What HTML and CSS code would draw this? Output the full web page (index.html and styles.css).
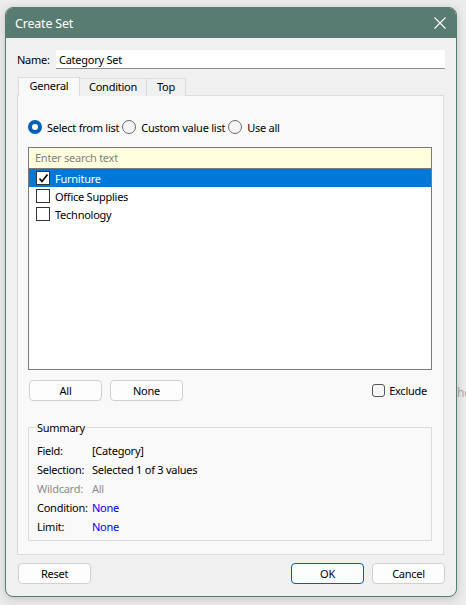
FILE: index.html
```html
<!DOCTYPE html>
<html>
<head>
<meta charset="utf-8">
<link rel="stylesheet" href="styles.css">
</head>
<body>
<div class="bg-text">he</div>
<div class="dialog">
  <div class="titlebar">
    <span class="title">Create Set</span>
    <svg class="close" width="12" height="12" viewBox="0 0 12 12"><path d="M0.5 0.5 L11.5 11.5 M11.5 0.5 L0.5 11.5" stroke="#fff" stroke-width="1.1" fill="none"/></svg>
  </div>
  <div class="content">
    <div class="name-row">
      <label class="name-label">Name:</label>
      <div class="name-input">Category Set</div>
    </div>
    <div class="tabs">
      <div class="tab active">General</div>
      <div class="tab">Condition</div>
      <div class="tab">Top</div>
    </div>
    <div class="panel">
      <div class="radios">
        <span class="radio checked"></span><span class="rlabel">Select from list</span>
        <span class="radio"></span><span class="rlabel">Custom value list</span>
        <span class="radio"></span><span class="rlabel">Use all</span>
      </div>
      <div class="listbox">
        <div class="search">Enter search text</div>
        <div class="item selected"><span class="cb checked"><svg width="11" height="11" viewBox="0 0 11 11"><path d="M1.5 5.5 L4 8.5 L9.5 1.5" stroke="#000" stroke-width="1.6" fill="none"/></svg></span>Furniture</div>
        <div class="item"><span class="cb"></span>Office Supplies</div>
        <div class="item"><span class="cb"></span>Technology</div>
      </div>
      <div class="btn-row">
        <button class="btn">All</button>
        <button class="btn">None</button>
        <span class="spacer"></span>
        <span class="cb small"></span><span class="exclude">Exclude</span>
      </div>
      <fieldset class="summary">
        <legend>Summary</legend>
        <div class="srow"><span class="sk">Field:</span><span class="sv">[Category]</span></div>
        <div class="srow"><span class="sk">Selection:</span><span class="sv">Selected 1 of 3 values</span></div>
        <div class="srow dim"><span class="sk">Wildcard:</span><span class="sv">All</span></div>
        <div class="srow"><span class="sk">Condition:</span><span class="sv link">None</span></div>
        <div class="srow"><span class="sk">Limit:</span><span class="sv link">None</span></div>
      </fieldset>
    </div>
    <div class="footer">
      <button class="btn">Reset</button>
      <span class="spacer"></span>
      <button class="btn primary">OK</button>
      <button class="btn">Cancel</button>
    </div>
  </div>
</div>
</body>
</html>
```
FILE: styles.css
```css
* { box-sizing: border-box; }
html, body { margin: 0; padding: 0; }
body {
  width: 466px;
  height: 605px;
  background: #ececec;
  font-family: "Noto Sans", "Open Sans", sans-serif;
  font-size: 11px;
  letter-spacing: -0.25px;
  color: #000;
  overflow: hidden;
  position: relative;
}
.bg-text {
  position: absolute;
  left: 457px;
  top: 384px;
  font-size: 12px;
  color: #a8a8a8;
}
.dialog {
  position: relative;
  margin: 7px 0 0 5px;
  width: 452px;
  height: 590px;
  background: #f0f0f0;
  border: 1px solid #587c72;
  border-radius: 8px;
  overflow: hidden;
  box-shadow: 0 2px 10px rgba(0,0,0,0.18);
  display: flex;
  flex-direction: column;
}
.titlebar {
  height: 30px;
  background: #587c72;
  display: flex;
  align-items: center;
  padding: 0 9px 0 9px;
  flex: none;
}
.title {
  color: #fff;
  font-size: 12.5px;
  letter-spacing: -0.2px;
  flex: 1;
}
.close { margin-right: 1px; }
.content {
  flex: 1;
  display: flex;
  flex-direction: column;
  padding: 12px 11px 0 11px;
}
.name-row {
  display: flex;
  align-items: center;
  height: 19px;
}
.name-label { width: 39px; }
.name-input {
  flex: 1;
  height: 19px;
  background: #fff;
  border-bottom: 1px solid #8a8a8a;
  padding: 1px 3px;
  line-height: 17px;
}
.tabs {
  display: flex;
  margin-top: 8px;
  margin-left: 1px;
  height: 19px;
  align-items: flex-end;
  position: relative;
  z-index: 1;
}
.tab {
  height: 18px;
  line-height: 16px;
  border: 1px solid #dcdcdc;
  border-bottom: none;
  background: #f0f0f0;
  margin-left: -1px;
  text-align: center;
  padding: 0;
}
.tab:nth-child(2) { width: 68px; }
.tab:nth-child(3) { width: 40px; }
.tab.active {
  height: 19px;
  background: #f9f9f9;
  width: 62px;
  margin-left: 0;
}
.panel {
  background: #f9f9f9;
  border: 1px solid #dcdcdc;
  margin-top: -1px;
  width: 427px;
  height: 460px;
  padding: 0 11px 0 10px;
  display: flex;
  flex-direction: column;
}
.radios {
  display: flex;
  align-items: center;
  margin-top: 23px;
  height: 16px;
}
.radio {
  width: 14px;
  height: 14px;
  border-radius: 50%;
  border: 1px solid #6b6b6b;
  background: #f4f4f4;
  margin-right: 5px;
  flex: none;
}
.radio.checked {
  border: 4px solid #005fb8;
  background: #fff;
}
.rlabel { margin-right: 3px; }
.listbox {
  margin-top: 12px;
  height: 223px;
  border: 1px solid #7a7a7a;
  background: #fff;
}
.search {
  height: 21px;
  background: #ffffdd;
  color: #7f7f7f;
  border-bottom: 1px solid #7a7a7a;
  padding-left: 6px;
  line-height: 20px;
}
.item {
  height: 18px;
  display: flex;
  align-items: center;
  padding-left: 7px;
}
.item.selected { background: #0078d7; color: #fff; }
.cb {
  width: 14px;
  height: 14px;
  border: 1px solid #333;
  background: #fff;
  margin-right: 5px;
  display: flex;
  align-items: center;
  justify-content: center;
  flex: none;
}
.btn-row {
  display: flex;
  align-items: center;
  margin-top: 10px;
  height: 21px;
}
.btn {
  font-family: inherit;
  font-size: 11px;
  letter-spacing: -0.25px;
  color: #000;
  width: 73px;
  height: 21px;
  background: #fdfdfd;
  border: 1px solid #d0d0d0;
  border-radius: 4px;
  padding: 0;
  margin-right: 8px;
}
.btn-row .btn:first-child { margin-left: 1px; }
.spacer { flex: 1; }
.cb.small {
  width: 13px;
  height: 13px;
  border-radius: 3px;
  border: 1px solid #555;
  background: #f7f7f7;
  margin-right: 4px;
}
.exclude { margin-right: 5px; }
.summary {
  margin: 19px 0 0 0;
  height: 121px;
  border: 1px solid #dcdcdc;
  padding: 6px 8px 0 8px;
}
.summary legend {
  padding: 0 1px;
  margin-left: -1px;
}
.srow {
  height: 19px;
  display: flex;
  align-items: center;
}
.sk { width: 55px; flex: none; }
.dim { color: #8c8c8c; }
.link { color: #0000ff; }
.footer {
  display: flex;
  align-items: center;
  margin-top: 8px;
  height: 21px;
  padding-left: 1px;
}
.footer .btn:last-child { margin-right: 0; }
.btn.primary { border: 1px solid #005fb8; }
```
